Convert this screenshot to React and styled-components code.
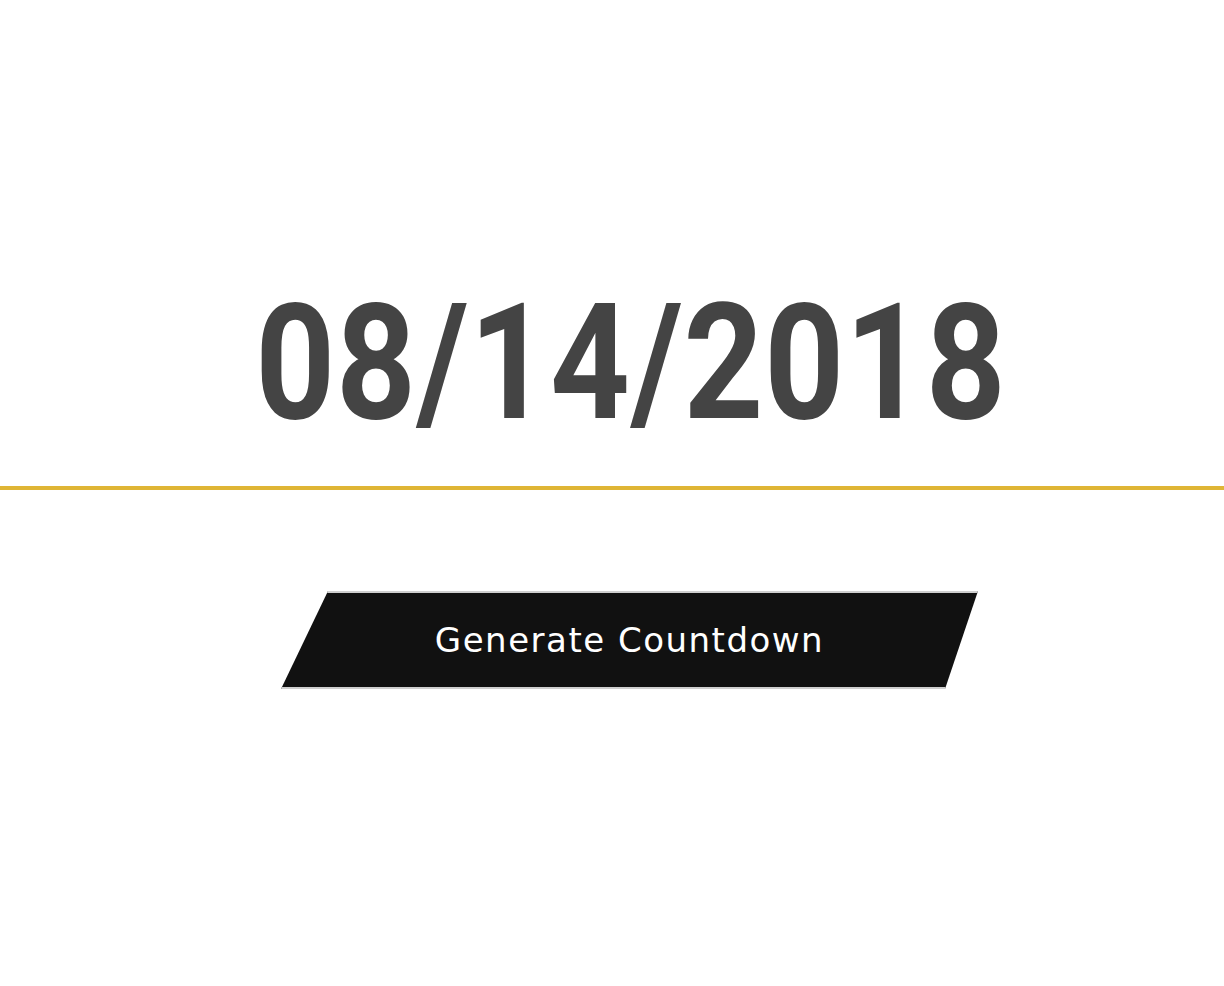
import React from "react";
import styled, { createGlobalStyle } from "styled-components";

const GlobalStyle = createGlobalStyle`
  html, body {
    margin: 0;
    padding: 0;
    background: #ffffff;
  }
`;

export default function App() {
  return (
    <React.Fragment>
      <GlobalStyle />
      <Page>
        <Hero>
          <DateText>08/14/2018</DateText>
        </Hero>
        <Actions>
          <GenerateButton type="button">Generate Countdown</GenerateButton>
        </Actions>
      </Page>
    </React.Fragment>
  );
}

const Page = styled.main`
  width: 100%;
  min-height: 986px;
  background: #ffffff;
`;

const Hero = styled.section`
  display: flex;
  justify-content: center;
  padding: 282px 0 41px 37px;
  border-bottom: 4px solid #dfb535;
`;

const DateText = styled.h1`
  margin: 0;
  font-family: Roboto, "Liberation Sans", sans-serif;
  font-weight: 700;
  font-size: 162px;
  line-height: 163px;
  letter-spacing: 1px;
  color: #444444;
  transform: scaleX(0.86);
  transform-origin: center;
  white-space: nowrap;
`;

const Actions = styled.div`
  display: flex;
  justify-content: center;
  padding: 101px 0 0 35px;
`;

const GenerateButton = styled.button`
  width: 697px;
  height: 98px;
  border: none;
  border-top: 2px solid #cfcfcf;
  border-bottom: 2px solid #cfcfcf;
  background: #111111;
  color: #ffffff;
  font-family: "DejaVu Sans", sans-serif;
  font-size: 34px;
  letter-spacing: 1.5px;
  padding: 0;
  clip-path: polygon(47px 0, 697px 0, 664px 98px, 0 98px);
  cursor: pointer;
`;
